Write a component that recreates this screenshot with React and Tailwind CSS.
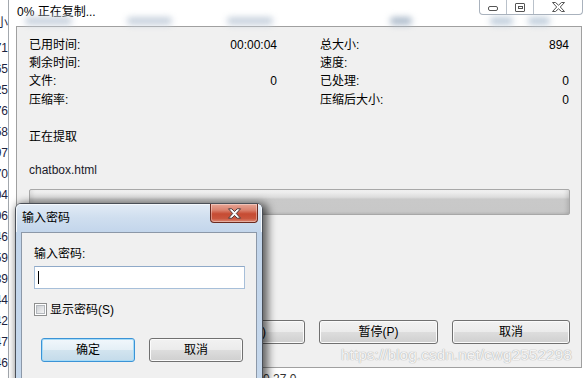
export default function App() {
  const listItems = ["大小", "1,071", "4,265", "2,125", "3,476", "1,158", "2,397", "1,670", "3,404", "1,506", "2,346", "1,659", "3,139", "1,544", "2,842", "1,347", "1,946", "2,920"];
  const winBtn =
    "flex items-center justify-center border border-[#707070] rounded-[3px] bg-[linear-gradient(to_bottom,#f2f2f2_0%,#ebebeb_50%,#dddddd_51%,#cfcfcf_100%)] shadow-[inset_0_0_0_1px_#fbfbfb] text-[12px] leading-none";
  return (
    <div className="relative w-[587px] h-[378px] overflow-hidden bg-white font-['Liberation_Sans','Noto_Sans_CJK_SC',sans-serif] text-[12px] text-black">
      {/* list behind */}
      <div className="absolute left-0 top-0 h-full w-[9px] overflow-hidden border-r border-[#a3a8ae] bg-white">
        <div className="flex flex-col pt-[12px]">
          {listItems.map((t, i) => (
            <div
              key={i}
              className={`flex h-[21px] items-center justify-end whitespace-nowrap text-[12px] text-[#1c2340] ${i === 1 ? "mt-[4px]" : ""}`}
            >
              {t}
            </div>
          ))}
        </div>
      </div>

      {/* bottom strip text */}
      <div className="absolute left-[263px] top-[372px] whitespace-nowrap text-[12px] leading-[14px] text-[#333]">0.27.0</div>

      {/* main window */}
      <div className="absolute left-[9px] top-0 w-[578px] h-[368px]">
        <div className="relative h-[26px] bg-white">
          <div className="pl-[8px] pt-[3px] leading-[18px] text-[12px] text-black">0% 正在复制...</div>
          {/* blurred content behind glass */}
          <div className="absolute left-[16px] top-[17px] h-[8px] w-[47px] rounded-full bg-[#c8d2de] blur-[3px]" />
          <div className="absolute left-[118px] top-[17px] h-[8px] w-[45px] rounded-full bg-[#c8d2de] blur-[3px]" />
          <div className="absolute left-[218px] top-[17px] h-[8px] w-[46px] rounded-full bg-[#c8d2de] blur-[3px]" />
          <div className="absolute left-[381px] top-[17px] h-[8px] w-[22px] rounded-full bg-[#aebccc] blur-[3px]" />
          <div className="absolute left-[481px] top-[17px] h-[8px] w-[23px] rounded-full bg-[#c0cedc] blur-[3px]" />
          <div className="absolute left-[519px] top-[17px] h-[8px] w-[22px] rounded-full bg-[#c0cedc] blur-[3px]" />
          {/* caption buttons */}
          <div className="absolute right-[4px] top-0 flex h-[15px] w-[104px] rounded-b-[4px] border border-t-0 border-[#a9b2bd] bg-white">
            <div className="flex w-[27px] items-center justify-center border-r border-[#b9c1ca]">
              <div className="mt-[2px] h-[5px] w-[10px] rounded-[2px] border border-[#555]" />
            </div>
            <div className="flex w-[27px] items-center justify-center border-r border-[#b9c1ca]">
              <div className="flex h-[9px] w-[10px] items-center justify-center rounded-[1px] border border-[#555]">
                <div className="h-[3px] w-[5px] border border-[#555]" />
              </div>
            </div>
            <div className="flex flex-1 items-center justify-center">
              <svg width="15" height="10" viewBox="0 0 15 10">
                <path
                  d="M1.5 0.5 H4.5 L7.5 3.2 L10.5 0.5 H13.5 L9.3 5 L13.5 9.5 H10.5 L7.5 6.8 L4.5 9.5 H1.5 L5.7 5 Z"
                  fill="#fff"
                  stroke="#555"
                  strokeWidth="1"
                  strokeLinejoin="round"
                />
              </svg>
            </div>
          </div>
        </div>

        {/* client area */}
        <div className="ml-[7px] h-[342px] w-[566px] border border-[#a0a0a0] bg-[#f0f0f0]">
          <div className="flex flex-col pl-[12px] pr-[11px] pt-[9px]">
            <div className="grid grid-cols-[248px_249px] gap-x-[43px]">
              <div className="flex flex-col">
                <div className="flex h-[18px] items-center justify-between"><span>已用时间:</span><span>00:00:04</span></div>
                <div className="flex h-[18px] items-center justify-between"><span>剩余时间:</span><span></span></div>
                <div className="flex h-[18px] items-center justify-between"><span>文件:</span><span>0</span></div>
                <div className="flex h-[19px] items-center justify-between pt-[1px]"><span>压缩率:</span><span></span></div>
              </div>
              <div className="flex flex-col">
                <div className="flex h-[18px] items-center justify-between"><span>总大小:</span><span>894</span></div>
                <div className="flex h-[18px] items-center justify-between"><span>速度:</span><span></span></div>
                <div className="flex h-[18px] items-center justify-between"><span>已处理:</span><span>0</span></div>
                <div className="flex h-[19px] items-center justify-between pt-[1px]"><span>压缩后大小:</span><span>0</span></div>
              </div>
            </div>
            <div className="mt-[19px] h-[18px] leading-[18px]">正在提取</div>
            <div className="mt-[15px] h-[18px] leading-[18px] text-[#1a1a2a]">chatbox.html</div>
            <div className="mt-[10px] h-[26px] w-[541px] rounded-[2px] border border-[#a8a8a8] bg-[linear-gradient(to_bottom,#f5f5f5_0%,#e9e9e9_15%,#dcdcdc_30%,#c9c9c9_38%,#c8c8c8_88%,#bebebe_100%)] shadow-[inset_-4px_0_4px_-2px_rgba(0,0,0,0.12),inset_4px_0_4px_-2px_rgba(0,0,0,0.08)]" />
            <div className="mt-[105px] flex justify-end gap-[14px]">
              <div className={`${winBtn} h-[24px] w-[118px]`}>后台(B)</div>
              <div className={`${winBtn} h-[24px] w-[119px]`}>暂停(P)</div>
              <div className={`${winBtn} h-[24px] w-[118px]`}>取消</div>
            </div>
          </div>
        </div>
      </div>

      {/* watermark */}
      <div className="absolute left-[341px] top-[345px] whitespace-nowrap text-[15.5px] leading-[20px] text-[#f4f4f4] [text-shadow:0_0_1px_#b0b0b0,0_0_1px_#b0b0b0]">
        https://blog.csdn.net/cwg2552298
      </div>

      {/* password dialog */}
      <div className="absolute left-[15px] top-[203px] h-[190px] w-[248px] rounded-t-[6px] border border-[#4a4f57] bg-[linear-gradient(to_bottom,#e2ebf6_0%,#cfdeef_14px,#c2d5eb_29px,#c6d8ec_100%)] shadow-[3px_2px_9px_2px_rgba(0,0,0,0.6)]">
        <div className="relative h-[28px] rounded-t-[5px] border-t border-l border-r border-[#f4f8fc]">
          <div className="pl-[5px] pt-[4px] leading-[18px] text-[12px] text-black">输入密码</div>
          <div className="absolute right-[3px] top-[-1px] flex h-[19px] w-[48px] items-center justify-center rounded-b-[4px] border border-t-0 border-[#6b2a20] bg-[linear-gradient(to_bottom,#e8a696_0%,#d9806c_35%,#c64b33_55%,#c9553d_80%,#dc8a76_100%)] shadow-[inset_0_0_0_1px_rgba(255,255,255,0.35)]">
            <svg width="15" height="11" viewBox="0 0 15 11">
              <path
                d="M1.5 0.8 H4.8 L7.5 3.6 L10.2 0.8 H13.5 L9.3 5.5 L13.5 10.2 H10.2 L7.5 7.4 L4.8 10.2 H1.5 L5.7 5.5 Z"
                fill="#fff"
                stroke="#4a3a3a"
                strokeWidth="1"
                strokeLinejoin="round"
              />
            </svg>
          </div>
        </div>
        <div className="mx-[5px] h-[160px] border border-[#8c98a8] bg-[#f0f0f0]">
          <div className="flex flex-col pl-[12px] pt-[12px]">
            <div className="h-[18px] leading-[18px]">输入密码:</div>
            <div className="mt-[3px] flex h-[23px] w-[211px] items-center border border-[#a7bfd9] border-t-[#8fa9c8] bg-white pl-[3px]">
              <div className="h-[13px] w-px bg-black" />
            </div>
            <div className="mt-[14px] flex h-[13px] items-center gap-[3px]">
              <div className="flex h-[13px] w-[13px] items-center justify-center border border-[#8e8f8f] bg-white">
                <div className="h-[9px] w-[9px] border border-[#b4b8bd] bg-[linear-gradient(135deg,#cdd0d4,#f4f4f4)]" />
              </div>
              <span className="leading-[16px]">显示密码(S)</span>
            </div>
            <div className="ml-[7px] mt-[22px] flex gap-[14px]">
              <div className="flex h-[24px] w-[94px] items-center justify-center rounded-[3px] border border-[#3b93d6] bg-[linear-gradient(to_bottom,#f1f7fb_0%,#e4eff6_50%,#d2e4ef_51%,#c4dbea_100%)] shadow-[inset_0_0_0_1px_#a6dbf7] leading-none">确定</div>
              <div className={`${winBtn} h-[24px] w-[94px]`}>取消</div>
            </div>
          </div>
        </div>
      </div>
    </div>
  );
}
